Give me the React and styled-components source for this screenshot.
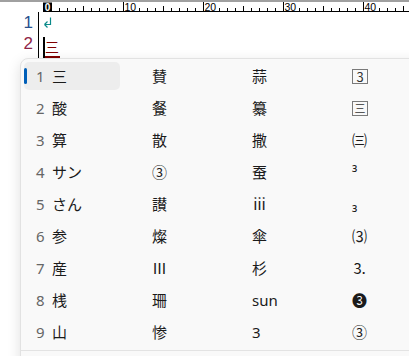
import React from 'react';
import styled, { createGlobalStyle } from 'styled-components';

const GlobalStyle = createGlobalStyle`
  html, body {
    margin: 0;
    padding: 0;
    background: #fff;
    overflow: hidden;
  }
  body {
    font-family: "Noto Sans", "Noto Sans CJK JP", sans-serif;
  }
`;

const Page = styled.div`
  position: relative;
  width: 409px;
  height: 356px;
  overflow: hidden;
  background: #fff;
`;

const TopEdge = styled.div`
  height: 2px;
  background: #a0a0a0;
`;

const RulerSvg = styled.svg`
  display: block;
`;

const Editor = styled.div`
  display: flex;
  height: 344px;
`;

const Gutter = styled.div`
  width: 39px;
  box-sizing: border-box;
  border-right: 1px solid #000;
  padding-right: 5px;
  font-family: "Liberation Sans", Arial, sans-serif;
  font-size: 17px;
  text-align: right;
`;

const LineNo = styled.div`
  height: 21px;
  line-height: 21px;
  color: ${p => p.$color};
`;

const TextArea = styled.div`
  display: flex;
  flex-direction: column;
  padding-left: 4px;
`;

const TextLine = styled.div`
  display: flex;
  align-items: flex-start;
  height: 21px;
  padding-top: 2px;
`;

const Cursor = styled.span`
  width: 2px;
  height: 22px;
  background: #000;
`;

const Composing = styled.span`
  font-family: "Noto Sans CJK JP", sans-serif;
  font-size: 14px;
  line-height: 19px;
  color: #800000;
  border-bottom: 3px solid #800000;
  padding-right: 1px;
`;

const Popup = styled.div`
  position: absolute;
  left: 20px;
  top: 58px;
  width: 430px;
  height: 320px;
  box-sizing: border-box;
  background: #f9f9f9;
  border: 1px solid #e2e2e2;
  border-radius: 8px;
  box-shadow: 0 4px 14px rgba(0, 0, 0, 0.13);
`;

const Grid = styled.div`
  display: grid;
  grid-template-columns: repeat(4, 96px);
  grid-auto-rows: 32px;
  column-gap: 4px;
  padding: 1px 3px 0;
`;

const Cell = styled.div`
  position: relative;
  display: flex;
  align-items: center;
  margin: 2px 0;
  border-radius: 5px;
  background: ${p => (p.$selected ? '#ededed' : 'transparent')};
  font-size: 15px;
  color: #1b1b1b;
`;

const Indicator = styled.span`
  position: absolute;
  left: 0;
  top: 6px;
  width: 3px;
  height: 16px;
  border-radius: 2px;
  background: #005fb8;
`;

const Num = styled.span`
  width: 28px;
  box-sizing: border-box;
  padding-left: 12px;
  color: #666;
  font-family: "Noto Sans", sans-serif;
  font-size: 15px;
`;

const Word = styled.span`
  font-family: "Noto Sans", "Noto Sans CJK JP", sans-serif;
  line-height: 20px;
`;

const Boxed = styled.span`
  display: inline-flex;
  align-items: center;
  justify-content: center;
  width: 14px;
  height: 13px;
  border: 1px solid #7a7a7a;
  font-family: "Noto Sans CJK JP", sans-serif;
  font-size: ${p => (p.$small ? '11px' : '13px')};
  line-height: 1;
  color: #333;
`;

const Footer = styled.div`
  margin-top: 2px;
  border-top: 1px solid #e3e3e3;
`;

const rows = [
  ['三', '賛', '蒜', { box: '3' }],
  ['酸', '餐', '纂', { box: '三', small: true }],
  ['算', '散', '撒', '㈢'],
  ['サン', '③', '蚕', '³'],
  ['さん', '讃', 'ⅲ', '₃'],
  ['参', '燦', '傘', '⑶'],
  ['産', 'Ⅲ', '杉', '⒊'],
  ['桟', '珊', 'sun', '❸'],
  ['山', '惨', '3', '③'],
];

function Ruler() {
  const marks = [];
  for (let i = 1; i < 46; i++) {
    const x = Math.round(43 + i * 8.01) + 0.5;
    if (i % 10 === 0) {
      marks.push(<line key={'l' + i} x1={x} x2={x} y1={0} y2={9} stroke="#000" />);
      marks.push(
        <text key={'t' + i} x={x + 1} y={8.6} fontSize="10.5" fontFamily="Liberation Sans, Arial, sans-serif" fill="#000">
          {i}
        </text>
      );
    } else if (i % 10 !== 1) {
      const h = i % 5 === 0 ? 5 : 3;
      marks.push(<line key={'l' + i} x1={x} x2={x} y1={9 - h} y2={9} stroke="#000" />);
    }
  }
  return (
    <RulerSvg width="409" height="10" viewBox="0 0 409 10">
      <line x1="43" x2="409" y1="9.5" y2="9.5" stroke="#000" />
      <rect x="43" y="0.5" width="9" height="9" fill="#000" />
      <text x="44.8" y="8.6" fontSize="10" fontWeight="bold" fontFamily="Liberation Sans, Arial, sans-serif" fill="#fff">0</text>
      {marks}
    </RulerSvg>
  );
}

function ReturnMark() {
  return (
    <svg width="9" height="11" viewBox="0 0 9 11" style={{ marginTop: 3 }}>
      <path d="M7.5 0.5 V7.5 H1.5 M1.5 7.5 L4.5 4.5 M1.5 7.5 L4.5 10.5" stroke="#0a8a8a" strokeWidth="1.2" fill="none" />
    </svg>
  );
}

function Candidate({ item }) {
  if (typeof item === 'object') {
    return <Boxed $small={item.small}>{item.box}</Boxed>;
  }
  return <Word>{item}</Word>;
}

export default function App() {
  return (
    <Page>
      <GlobalStyle />
      <TopEdge />
      <Ruler />
      <Editor>
        <Gutter>
          <LineNo $color="#27508e">1</LineNo>
          <LineNo $color="#8e2446">2</LineNo>
        </Gutter>
        <TextArea>
          <TextLine>
            <ReturnMark />
          </TextLine>
          <TextLine>
            <Cursor />
            <Composing>三</Composing>
          </TextLine>
        </TextArea>
      </Editor>
      <Popup>
        <Grid>
          {rows.map((row, r) =>
            row.map((item, c) => (
              <Cell key={r + '-' + c} $selected={r === 0 && c === 0}>
                {r === 0 && c === 0 && <Indicator />}
                <Num>{c === 0 ? r + 1 : ''}</Num>
                <Candidate item={item} />
              </Cell>
            ))
          )}
        </Grid>
        <Footer />
      </Popup>
    </Page>
  );
}
